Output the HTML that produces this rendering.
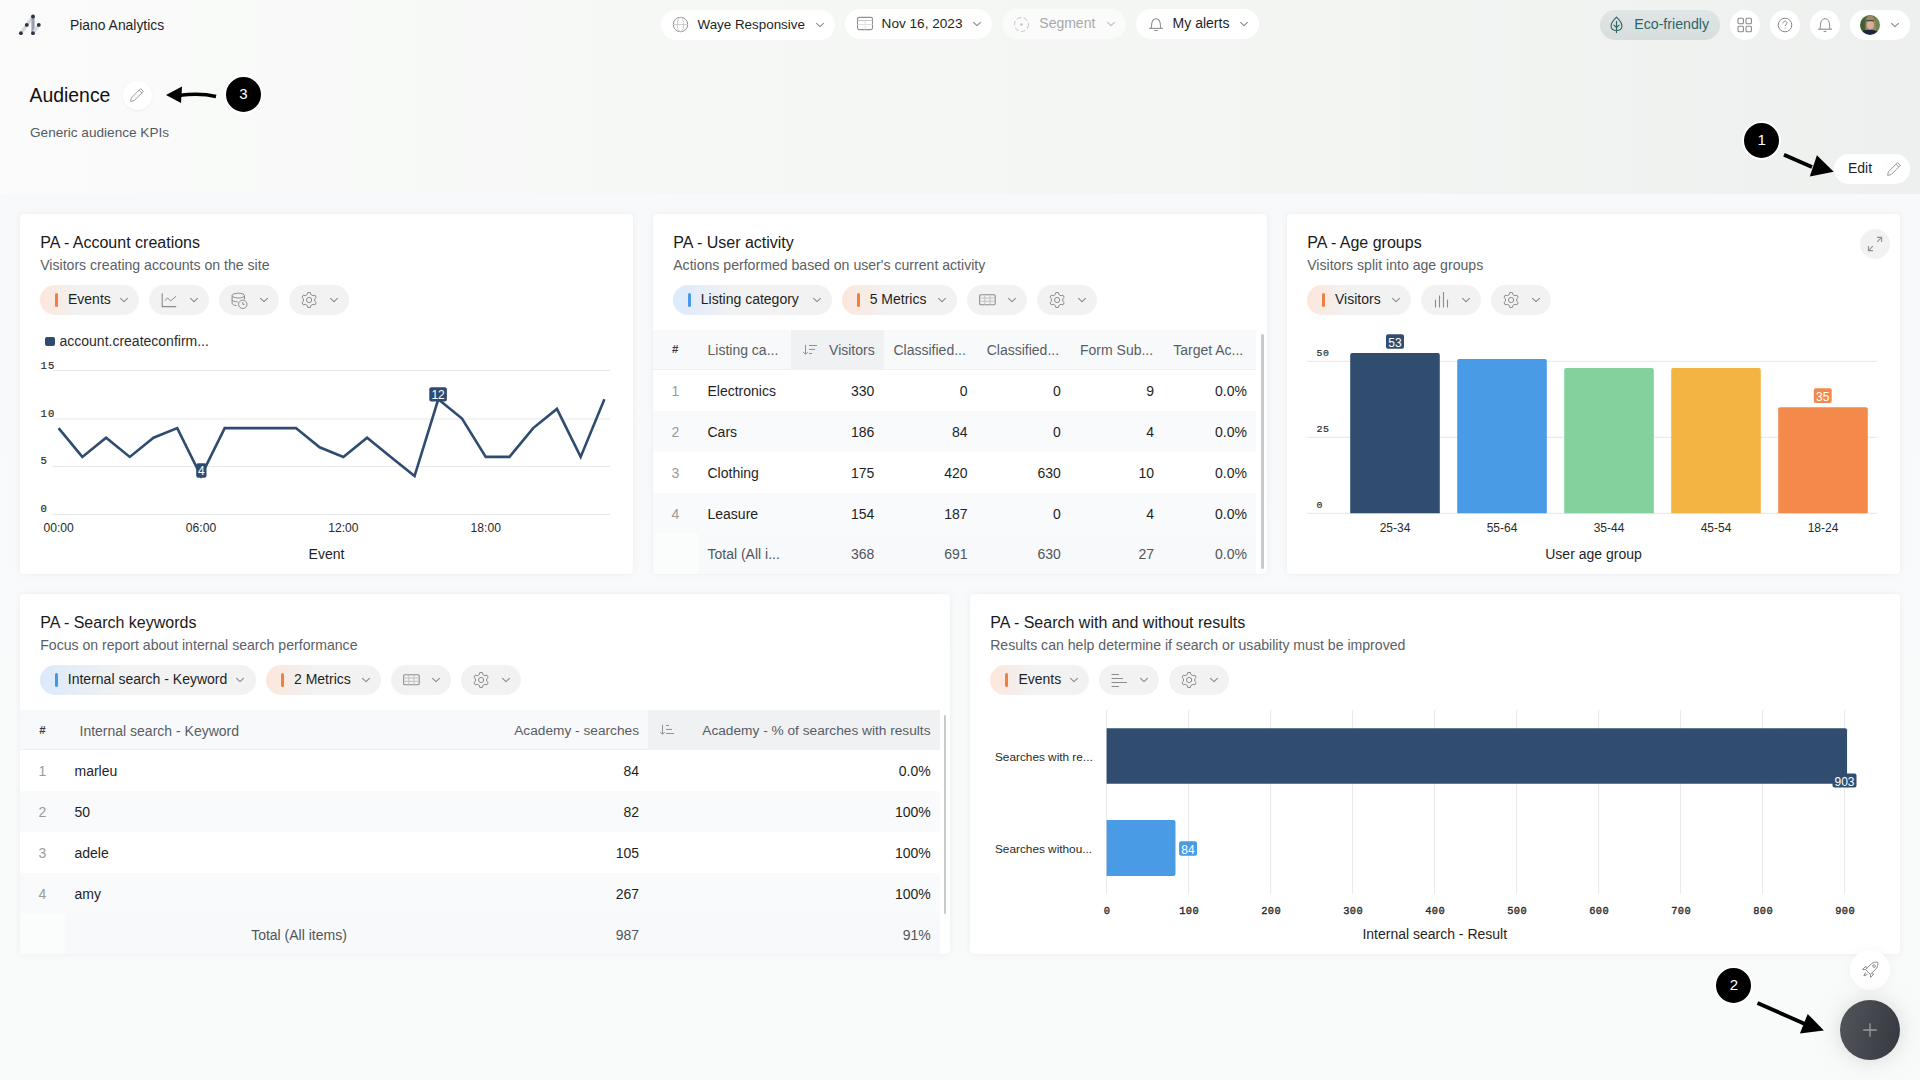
<!DOCTYPE html>
<html><head><meta charset="utf-8"><title>Piano Analytics - Audience</title>
<style>
html,body{margin:0;padding:0;width:1920px;height:1080px;overflow:hidden;background:#f8f9fa;font-family:"Liberation Sans",sans-serif}
body>div,body>svg{position:absolute}
</style></head><body>
<div style="left:0;top:0;width:1920px;height:194px;background:linear-gradient(90deg,#fafbfa 0%,#f6f8f6 35%,#f3f5f3 70%,#eef0ef 100%)"></div><div style="left:0;top:194px;width:1920px;height:886px;background:linear-gradient(180deg,#f8f9fa 0%,#f9fafa 60%,#f9fbfa 100%)"></div><svg style="left:16px;top:12px;" width="28" height="26" viewBox="0 0 28 26">
<path d="M4.9 21.2 L17 4.5" stroke="#d5d8de" stroke-width="3.2" stroke-linecap="round"/>
<path d="M17 4.5 L17 21.2" stroke="#9aa0ab" stroke-width="3.2" stroke-linecap="round"/>
<path d="M17 21.2 L22.8 12.9" stroke="#d5d8de" stroke-width="3.2" stroke-linecap="round"/>
<circle cx="17" cy="4.5" r="1.9" fill="#2b3347"/><circle cx="10.8" cy="12.9" r="1.9" fill="#2b3347"/>
<circle cx="22.8" cy="12.9" r="1.9" fill="#2b3347"/><circle cx="4.9" cy="21.2" r="1.9" fill="#2b3347"/>
<circle cx="17" cy="21.2" r="1.9" fill="#2b3347"/></svg><div style="left:70.00px;top:18.83px;font:400 13.9px/13.9px 'Liberation Sans', sans-serif;color:#1f1f1f;white-space:nowrap;">Piano Analytics</div><div style="left:661px;top:10px;width:174px;height:30px;background:#ffffff;border-radius:15px;"></div><svg style="left:672px;top:16px;" width="17" height="17" viewBox="0 0 17 17"><circle cx="8.5" cy="8.5" r="7.2" fill="none" stroke="#8f8f8f" stroke-width="1"/><ellipse cx="8.5" cy="8.5" rx="3.2" ry="7.2" fill="none" stroke="#cfcfcf" stroke-width="1"/><path d="M1.3 8.5 H15.7" stroke="#cfcfcf" stroke-width="1"/></svg><div style="left:697.50px;top:17.86px;font:400 13.4px/13.4px 'Liberation Sans', sans-serif;color:#1f1f1f;white-space:nowrap;">Waye Responsive</div><svg style="left:813.8px;top:19.6px;" width="12" height="10" viewBox="0 0 12 10"><path d="M2.55 3.3 L6 6.7 L9.45 3.3" fill="none" stroke="#8c8c8c" stroke-width="1.1" stroke-linecap="round" stroke-linejoin="round"/></svg><div style="left:845px;top:9px;width:147px;height:30px;background:#ffffff;border-radius:15px;"></div><svg style="left:856px;top:16px;" width="18" height="15" viewBox="0 0 18 15"><rect x="1.5" y="1.4" width="15" height="12.2" rx="1.6" fill="none" stroke="#8f9094" stroke-width="1.1"/><path d="M1.5 4.6 H16.5" stroke="#c4c5c7" stroke-width="1"/><path d="M1.5 8.5 H16.5 M9.2 4.6 V13.6" stroke="#dfe0e1" stroke-width="1"/></svg><div style="left:881.60px;top:16.79px;font:400 13.6px/13.6px 'Liberation Sans', sans-serif;color:#1f1f1f;white-space:nowrap;">Nov 16, 2023</div><svg style="left:970.8px;top:18.6px;" width="12" height="10" viewBox="0 0 12 10"><path d="M2.55 3.3 L6 6.7 L9.45 3.3" fill="none" stroke="#8c8c8c" stroke-width="1.1" stroke-linecap="round" stroke-linejoin="round"/></svg><div style="left:1002px;top:9px;width:124px;height:30px;background:rgba(255,255,255,0.55);border-radius:15px;"></div><svg style="left:1013px;top:16px;" width="17" height="17" viewBox="0 0 17 17"><circle cx="8.5" cy="8.5" r="7" fill="none" stroke="#c4c4c4" stroke-width="1" stroke-dasharray="4.5 2.5"/><circle cx="8.5" cy="8.5" r="1.3" fill="#c4c4c4"/></svg><div style="left:1039.30px;top:15.95px;font:400 14px/14px 'Liberation Sans', sans-serif;color:#a9a9a9;white-space:nowrap;">Segment</div><svg style="left:1105px;top:18.6px;" width="12" height="10" viewBox="0 0 12 10"><path d="M2.55 3.3 L6 6.7 L9.45 3.3" fill="none" stroke="#bdbdbd" stroke-width="1.1" stroke-linecap="round" stroke-linejoin="round"/></svg><div style="left:1136px;top:9px;width:123px;height:30px;background:#ffffff;border-radius:15px;"></div><svg style="left:1148px;top:17px;" width="16" height="15" viewBox="0 0 16 15"><path d="M3.3 11 C3.5 8 3.6 5.5 4.6 3.6 C5.4 2.3 6.6 1.7 8 1.7 C9.4 1.7 10.6 2.3 11.4 3.6 C12.4 5.5 12.5 8 12.7 11" fill="none" stroke="#8f9094" stroke-width="1.05"/><path d="M1 11.4 H15" stroke="#8f9094" stroke-width="1.1"/><path d="M6.2 13.5 H9.8" stroke="#8f9094" stroke-width="1"/></svg><div style="left:1172.60px;top:15.95px;font:400 14px/14px 'Liberation Sans', sans-serif;color:#1f1f1f;white-space:nowrap;">My alerts</div><svg style="left:1237.6px;top:18.6px;" width="12" height="10" viewBox="0 0 12 10"><path d="M2.55 3.3 L6 6.7 L9.45 3.3" fill="none" stroke="#8c8c8c" stroke-width="1.1" stroke-linecap="round" stroke-linejoin="round"/></svg><div style="left:1600px;top:10px;width:120px;height:30px;background:linear-gradient(180deg,#e0e5e5,#d7dddd);border-radius:15px"></div><svg style="left:1609px;top:16px;" width="15" height="18" viewBox="0 0 15 18"><path d="M7.5 1.2 C10.4 4 12.9 7 12.9 10 C12.9 12.8 10.6 14.5 7.5 14.5 C4.4 14.5 2.1 12.8 2.1 10 C2.1 7 4.6 4 7.5 1.2 Z" fill="none" stroke="#2a6566" stroke-width="1.15"/><path d="M7.5 5.3 V16.6 M4.9 9.2 L7.5 11.7 L10.1 9.2" fill="none" stroke="#2a6566" stroke-width="1.15" stroke-linecap="round" stroke-linejoin="round"/></svg><div style="left:1634.20px;top:16.78px;font:400 14.2px/14.2px 'Liberation Sans', sans-serif;color:#2b6767;white-space:nowrap;">Eco-friendly</div><div style="left:1730.0px;top:10.0px;width:30px;height:30px;background:#fff;border-radius:50%"></div><svg style="left:1737px;top:17px;" width="16" height="16" viewBox="0 0 16 16"><rect x="1" y="1.3" width="5.4" height="5.4" rx="1" fill="none" stroke="#8a8a8a" stroke-width="1.1"/><rect x="9" y="1.3" width="5.4" height="5.4" rx="1" fill="none" stroke="#8a8a8a" stroke-width="1.1"/><rect x="1" y="9.3" width="5.4" height="5.4" rx="1" fill="none" stroke="#8a8a8a" stroke-width="1.1"/><rect x="9" y="9.3" width="5.4" height="5.4" rx="1" fill="none" stroke="#8a8a8a" stroke-width="1.1"/></svg><div style="left:1770.0px;top:10.0px;width:30px;height:30px;background:#fff;border-radius:50%"></div><svg style="left:1777px;top:17px;" width="16" height="16" viewBox="0 0 16 16"><circle cx="8" cy="8" r="6.8" fill="none" stroke="#8a8a8a" stroke-width="1"/><path d="M6 6.3 C6 4.9 7 4.2 8 4.2 C9.1 4.2 10 4.9 10 6 C10 7.3 8.2 7.5 8.2 9" fill="none" stroke="#8a8a8a" stroke-width="1"/><circle cx="8.1" cy="11" r="0.6" fill="#8a8a8a"/></svg><div style="left:1810.0px;top:10.0px;width:30px;height:30px;background:#fff;border-radius:50%"></div><svg style="left:1817px;top:17px;" width="16" height="16" viewBox="0 0 16 16"><path d="M3.3 11.8 C3.3 8 3.4 5.5 4.6 3.6 C5.4 2.3 6.6 1.7 8 1.7 C9.4 1.7 10.6 2.3 11.4 3.6 C12.6 5.5 12.7 8 12.7 11.8" fill="none" stroke="#8a8a8a" stroke-width="1"/><path d="M1 12.2 H15" stroke="#8a8a8a" stroke-width="1.1"/><path d="M6.6 14.4 H9.4" stroke="#8a8a8a" stroke-width="1"/></svg><div style="left:1850px;top:10px;width:60px;height:30px;background:#ffffff;border-radius:15px;"></div><svg style="left:1860px;top:15px;" width="20" height="20" viewBox="0 0 20 20"><defs><clipPath id="av"><circle cx="10" cy="10" r="10"/></clipPath><filter id="avb" x="-20%" y="-20%" width="140%" height="140%"><feGaussianBlur stdDeviation="0.55"/></filter></defs>
<g clip-path="url(#av)"><g filter="url(#avb)"><rect x="-2" y="-2" width="24" height="24" fill="#55743f"/><rect x="-2" y="-2" width="7" height="24" fill="#3f5e30"/><rect x="15" y="-2" width="7" height="24" fill="#6a8850"/>
<path d="M5.8 16 C5.2 11 5.5 4.5 7.8 1.6 C9.3 0.4 12 0.4 13.4 1.7 C15.6 4.5 15.6 11 16.4 17 Z" fill="#a08a66"/>
<ellipse cx="10.3" cy="10" rx="3.5" ry="5" fill="#d8b096"/>
<path d="M6.2 5.6 H13.9" stroke="#4b4452" stroke-width="1.3"/>

<path d="M-1 22 C0 16 4 14.8 10 14.8 C15 14.8 19 16 20.5 22 Z" fill="#1f2640"/></g></g></svg><svg style="left:1888.8px;top:19.8px;" width="12" height="10" viewBox="0 0 12 10"><path d="M2.55 3.3 L6 6.7 L9.45 3.3" fill="none" stroke="#8a8a8a" stroke-width="1.1" stroke-linecap="round" stroke-linejoin="round"/></svg><div style="left:29.50px;top:86.18px;font:400 19.4px/19.4px 'Liberation Sans', sans-serif;color:#111;white-space:nowrap;">Audience</div><div style="left:122.5px;top:80.5px;width:29px;height:29px;background:#fff;border-radius:50%;box-shadow:0 1px 3px rgba(0,0,0,0.05)"></div><svg style="left:129px;top:87px;" width="16" height="16" viewBox="0 0 16 16"><g transform="scale(1.0)"><path d="M11.6 1.6 L14.4 4.4 L5.2 13.6 L1.6 14.4 L2.4 10.8 Z" fill="none" stroke="#9a9a9a" stroke-width="1" stroke-linejoin="round"/><path d="M10 3.2 L12.8 6" stroke="#9a9a9a" stroke-width="1"/></g></svg><div style="left:30.00px;top:125.69px;font:400 13.6px/13.6px 'Liberation Sans', sans-serif;color:#555b61;white-space:nowrap;">Generic audience KPIs</div><svg style="left:160px;top:82px;" width="62" height="26" viewBox="0 0 62 26"><path d="M56 14.5 C44 11.5 32 11.8 20 13.2" fill="none" stroke="#000" stroke-width="3.4"/><path d="M6 13 L22 4.5 L21 21 Z" fill="#000"/></svg><div style="left:223.9px;top:74.9px;width:39px;height:39px;background:#000;border-radius:50%;border:2px solid #fff;box-sizing:border-box"></div><div style="left:-256.60px;width:1000px;text-align:center;top:85.70px;font:400 15px/15px 'Liberation Sans', sans-serif;color:#fff;white-space:nowrap;">3</div><div style="left:1834px;top:154px;width:76px;height:30px;background:#fff;border-radius:15px"></div><div style="left:1848.00px;top:160.85px;font:400 14px/14px 'Liberation Sans', sans-serif;color:#1f1f1f;white-space:nowrap;">Edit</div><svg style="left:1886px;top:161px;" width="16" height="16" viewBox="0 0 16 16"><g transform="scale(1.0)"><path d="M11.6 1.6 L14.4 4.4 L5.2 13.6 L1.6 14.4 L2.4 10.8 Z" fill="none" stroke="#9a9a9a" stroke-width="1" stroke-linejoin="round"/><path d="M10 3.2 L12.8 6" stroke="#9a9a9a" stroke-width="1"/></g></svg><div style="left:1742.1px;top:121.30000000000001px;width:39px;height:39px;background:#000;border-radius:50%;border:2px solid #fff;box-sizing:border-box"></div><div style="left:1261.60px;width:1000px;text-align:center;top:132.10px;font:400 15px/15px 'Liberation Sans', sans-serif;color:#fff;white-space:nowrap;">1</div><svg style="left:1780px;top:150px;" width="56" height="30" viewBox="0 0 56 30"><path d="M4 4.8 L32 17" fill="none" stroke="#000" stroke-width="3.8"/><path d="M36.9 5.3 L29.8 26.4 L53.7 21.7 Z" fill="#000"/></svg><div style="left:20px;top:214px;width:613.3px;height:360px;background:#fff;border-radius:4px;box-shadow:0 0 10px rgba(30,40,60,0.045),0 0 2px rgba(30,40,60,0.035)"></div><div style="left:40.20px;top:235.46px;font:400 16px/16px 'Liberation Sans', sans-serif;color:#1a1a1a;white-space:nowrap;">PA - Account creations</div><div style="left:40.20px;top:258.26px;font:400 14.1px/14.1px 'Liberation Sans', sans-serif;color:#5b6066;white-space:nowrap;">Visitors creating accounts on the site</div><div style="left:40px;top:285px;width:99px;height:30px;background:linear-gradient(90deg,#fde6da 0%,#f2f2f2 38%,#f2f2f2 100%);border-radius:15px"></div><div style="left:55px;top:293px;width:3px;height:14px;background:#f27f3d;border-radius:1.5px"></div><div style="left:68.00px;top:291.95px;font:400 14px/14px 'Liberation Sans', sans-serif;color:#1f1f1f;white-space:nowrap;">Events</div><svg style="left:117.8px;top:294.8px;" width="12" height="10" viewBox="0 0 12 10"><path d="M2.55 3.3 L6 6.7 L9.45 3.3" fill="none" stroke="#8c8c8c" stroke-width="1.1" stroke-linecap="round" stroke-linejoin="round"/></svg><div style="left:149.2px;top:285px;width:60px;height:30px;background:#f2f2f2;border-radius:15px"></div><svg style="left:161.2px;top:292px;" width="17" height="16" viewBox="0 0 17 16"><path d="M1.2 1.2 V14.6 H15.2" fill="none" stroke="#8c8c8c" stroke-width="1.1"/><path d="M3.8 8.8 L6.4 6 L9.7 8.8 L15.2 4.2" fill="none" stroke="#8c8c8c" stroke-width="1"/></svg><svg style="left:188.2px;top:294.8px;" width="12" height="10" viewBox="0 0 12 10"><path d="M2.55 3.3 L6 6.7 L9.45 3.3" fill="none" stroke="#8c8c8c" stroke-width="1.1" stroke-linecap="round" stroke-linejoin="round"/></svg><div style="left:219.2px;top:285px;width:60px;height:30px;background:#f2f2f2;border-radius:15px"></div><svg style="left:231.2px;top:292px;" width="17" height="17" viewBox="0 0 17 17"><ellipse cx="7.3" cy="3.6" rx="6.2" ry="2.4" fill="none" stroke="#8c8c8c" stroke-width="1"/><path d="M1.1 3.6 V11.2 C1.1 12.4 3 13.4 5.6 13.6 M13.5 3.6 V7.4 M1.1 7.5 C1.1 8.8 3.5 9.8 6.8 9.9" fill="none" stroke="#8c8c8c" stroke-width="1"/><circle cx="11.8" cy="12.3" r="4.2" fill="#f2f2f2" stroke="#8c8c8c" stroke-width="1"/><path d="M11.8 10 V12.4 H13.6" fill="none" stroke="#8c8c8c" stroke-width="1"/></svg><svg style="left:258.2px;top:294.8px;" width="12" height="10" viewBox="0 0 12 10"><path d="M2.55 3.3 L6 6.7 L9.45 3.3" fill="none" stroke="#8c8c8c" stroke-width="1.1" stroke-linecap="round" stroke-linejoin="round"/></svg><div style="left:289.2px;top:285px;width:60px;height:30px;background:#f2f2f2;border-radius:15px"></div><svg style="left:301.2px;top:292px;" width="18" height="18" viewBox="0 0 18 18"><path d="M6.39 2.46 L6.81 0.51 L9.39 0.51 L9.81 2.46 L12.04 3.75 L13.94 3.14 L15.23 5.37 L13.76 6.71 L13.76 9.29 L15.23 10.63 L13.94 12.86 L12.04 12.25 L9.81 13.54 L9.39 15.49 L6.81 15.49 L6.39 13.54 L4.16 12.25 L2.26 12.86 L0.97 10.63 L2.44 9.29 L2.44 6.71 L0.97 5.37 L2.26 3.14 L4.16 3.75 Z" fill="none" stroke="#8c8c8c" stroke-width="1" stroke-linejoin="round"/><circle cx="8.1" cy="8" r="2.6" fill="none" stroke="#8c8c8c" stroke-width="1"/></svg><svg style="left:328.2px;top:294.8px;" width="12" height="10" viewBox="0 0 12 10"><path d="M2.55 3.3 L6 6.7 L9.45 3.3" fill="none" stroke="#8c8c8c" stroke-width="1.1" stroke-linecap="round" stroke-linejoin="round"/></svg><div style="left:45px;top:336.5px;width:10px;height:9.5px;background:#2f4c6f;border-radius:2px"></div><div style="left:59.50px;top:334.45px;font:400 14px/14px 'Liberation Sans', sans-serif;color:#2b2b2b;white-space:nowrap;">account.createconfirm...</div><svg style="left:20px;top:320px" width="613" height="254" viewBox="20 320 613 254"><rect x="53" y="370.0" width="557" height="1" fill="#e6e7e8"/><rect x="53" y="418.5" width="557" height="1" fill="#e6e7e8"/><rect x="53" y="466.0" width="557" height="1" fill="#e6e7e8"/><rect x="53" y="514.0" width="557" height="1" fill="#e6e7e8"/><path d="M58.60 428.10 L82.33 456.90 L106.06 437.70 L129.79 456.90 L153.52 437.70 L177.25 428.10 L200.98 476.10 L224.71 428.10 L248.44 428.10 L272.17 428.10 L295.90 428.10 L319.63 447.30 L343.36 456.90 L367.09 437.70 L390.82 456.90 L414.55 476.10 L438.28 399.30 L462.01 418.50 L485.74 456.90 L509.47 456.90 L533.20 428.10 L556.93 408.90 L580.66 456.90 L604.39 399.30" fill="none" stroke="#2f4c70" stroke-width="2.6" stroke-linejoin="miter" stroke-miterlimit="3"/><rect x="196.2" y="463.2" width="10.3" height="14.6" rx="2" fill="#2f4c70"/><rect x="429.3" y="387.2" width="17.6" height="14.4" rx="2" fill="#2f4c70"/></svg><div style="left:40.60px;top:360.93px;font:400 10.6px/10.6px 'Liberation Mono', monospace;color:#2a2a2a;white-space:nowrap;letter-spacing:1px;-webkit-text-stroke:0.2px #2a2a2a">15</div><div style="left:40.60px;top:409.23px;font:400 10.6px/10.6px 'Liberation Mono', monospace;color:#2a2a2a;white-space:nowrap;letter-spacing:1px;-webkit-text-stroke:0.2px #2a2a2a">10</div><div style="left:40.60px;top:455.83px;font:400 10.6px/10.6px 'Liberation Mono', monospace;color:#2a2a2a;white-space:nowrap;letter-spacing:1px;-webkit-text-stroke:0.2px #2a2a2a">5</div><div style="left:40.60px;top:504.03px;font:400 10.6px/10.6px 'Liberation Mono', monospace;color:#2a2a2a;white-space:nowrap;letter-spacing:1px;-webkit-text-stroke:0.2px #2a2a2a">0</div><div style="left:-298.65px;width:1000px;text-align:center;top:465.44px;font:400 12px/12px 'Liberation Sans', sans-serif;color:#fff;white-space:nowrap;">4</div><div style="left:-61.90px;width:1000px;text-align:center;top:389.44px;font:400 12px/12px 'Liberation Sans', sans-serif;color:#fff;white-space:nowrap;">12</div><div style="left:-441.40px;width:1000px;text-align:center;top:521.96px;font:400 12.1px/12.1px 'Liberation Sans', sans-serif;color:#2a2a2a;white-space:nowrap;">00:00</div><div style="left:-299.02px;width:1000px;text-align:center;top:521.96px;font:400 12.1px/12.1px 'Liberation Sans', sans-serif;color:#2a2a2a;white-space:nowrap;">06:00</div><div style="left:-156.64px;width:1000px;text-align:center;top:521.96px;font:400 12.1px/12.1px 'Liberation Sans', sans-serif;color:#2a2a2a;white-space:nowrap;">12:00</div><div style="left:-14.26px;width:1000px;text-align:center;top:521.96px;font:400 12.1px/12.1px 'Liberation Sans', sans-serif;color:#2a2a2a;white-space:nowrap;">18:00</div><div style="left:-173.50px;width:1000px;text-align:center;top:547.15px;font:400 14px/14px 'Liberation Sans', sans-serif;color:#1f1f1f;white-space:nowrap;">Event</div><div style="left:653.3px;top:214px;width:613.4000000000001px;height:360px;background:#fff;border-radius:4px;box-shadow:0 0 10px rgba(30,40,60,0.045),0 0 2px rgba(30,40,60,0.035)"></div><div style="left:673.20px;top:235.46px;font:400 16px/16px 'Liberation Sans', sans-serif;color:#1a1a1a;white-space:nowrap;">PA - User activity</div><div style="left:673.20px;top:258.26px;font:400 14.1px/14.1px 'Liberation Sans', sans-serif;color:#5b6066;white-space:nowrap;">Actions performed based on user's current activity</div><div style="left:672.8px;top:285px;width:159.2px;height:30px;background:linear-gradient(90deg,#dbeafb 0%,#f2f2f2 38%,#f2f2f2 100%);border-radius:15px"></div><div style="left:687.8px;top:293px;width:3px;height:14px;background:#4796e8;border-radius:1.5px"></div><div style="left:700.80px;top:291.95px;font:400 14px/14px 'Liberation Sans', sans-serif;color:#1f1f1f;white-space:nowrap;">Listing category</div><svg style="left:810.8px;top:294.8px;" width="12" height="10" viewBox="0 0 12 10"><path d="M2.55 3.3 L6 6.7 L9.45 3.3" fill="none" stroke="#8c8c8c" stroke-width="1.1" stroke-linecap="round" stroke-linejoin="round"/></svg><div style="left:841.7px;top:285px;width:115.4px;height:30px;background:linear-gradient(90deg,#fde6da 0%,#f2f2f2 38%,#f2f2f2 100%);border-radius:15px"></div><div style="left:856.7px;top:293px;width:3px;height:14px;background:#f27f3d;border-radius:1.5px"></div><div style="left:869.70px;top:291.95px;font:400 14px/14px 'Liberation Sans', sans-serif;color:#1f1f1f;white-space:nowrap;">5 Metrics</div><svg style="left:935.9px;top:294.8px;" width="12" height="10" viewBox="0 0 12 10"><path d="M2.55 3.3 L6 6.7 L9.45 3.3" fill="none" stroke="#8c8c8c" stroke-width="1.1" stroke-linecap="round" stroke-linejoin="round"/></svg><div style="left:967px;top:285px;width:60px;height:30px;background:#f2f2f2;border-radius:15px"></div><svg style="left:979px;top:294px;" width="18" height="12" viewBox="0 0 18 12"><rect x="0.6" y="0.7" width="15.6" height="10" rx="1.2" fill="none" stroke="#8c8c8c" stroke-width="1.1"/><path d="M0.6 4 H16.2 M0.6 7.3 H16.2 M5.8 0.7 V10.7 M11 0.7 V10.7" stroke="#c2c2c2" stroke-width="1"/></svg><svg style="left:1006px;top:294.8px;" width="12" height="10" viewBox="0 0 12 10"><path d="M2.55 3.3 L6 6.7 L9.45 3.3" fill="none" stroke="#8c8c8c" stroke-width="1.1" stroke-linecap="round" stroke-linejoin="round"/></svg><div style="left:1037px;top:285px;width:60px;height:30px;background:#f2f2f2;border-radius:15px"></div><svg style="left:1049px;top:292px;" width="18" height="18" viewBox="0 0 18 18"><path d="M6.39 2.46 L6.81 0.51 L9.39 0.51 L9.81 2.46 L12.04 3.75 L13.94 3.14 L15.23 5.37 L13.76 6.71 L13.76 9.29 L15.23 10.63 L13.94 12.86 L12.04 12.25 L9.81 13.54 L9.39 15.49 L6.81 15.49 L6.39 13.54 L4.16 12.25 L2.26 12.86 L0.97 10.63 L2.44 9.29 L2.44 6.71 L0.97 5.37 L2.26 3.14 L4.16 3.75 Z" fill="none" stroke="#8c8c8c" stroke-width="1" stroke-linejoin="round"/><circle cx="8.1" cy="8" r="2.6" fill="none" stroke="#8c8c8c" stroke-width="1"/></svg><svg style="left:1076px;top:294.8px;" width="12" height="10" viewBox="0 0 12 10"><path d="M2.55 3.3 L6 6.7 L9.45 3.3" fill="none" stroke="#8c8c8c" stroke-width="1.1" stroke-linecap="round" stroke-linejoin="round"/></svg><div style="left:653.3px;top:330px;width:602.7px;height:40px;background:#f8f9fa;border-bottom:1px solid #eef0f2;box-sizing:border-box"></div><div style="left:791.2px;top:330px;width:92.6px;height:40px;background:#f0f1f3"></div><div style="left:653.3px;top:370px;width:602.7px;height:41px;background:#ffffff"></div><div style="left:653.3px;top:411px;width:602.7px;height:41px;background:#f9fafb"></div><div style="left:653.3px;top:452px;width:602.7px;height:41px;background:#ffffff"></div><div style="left:653.3px;top:493px;width:602.7px;height:41px;background:#f9fafb"></div><div style="left:653.3px;top:534px;width:602.7px;height:40px;background:#f8f9fa"></div><div style="left:653.3px;top:534px;width:45.30000000000007px;height:40px;background:#fbfcfc"></div><div style="left:1261px;top:334px;width:2.6px;height:235px;background:#c9cacb;border-radius:1.5px"></div><div style="left:175.30px;width:1000px;text-align:center;top:344.27px;font:700 11.5px/11.5px 'Liberation Sans', sans-serif;color:#3a3d42;white-space:nowrap;">#</div><div style="left:707.50px;top:343.25px;font:400 14px/14px 'Liberation Sans', sans-serif;color:#585d63;white-space:nowrap;">Listing ca...</div><svg style="left:802px;top:343px;" width="16" height="14" viewBox="0 0 16 14"><path d="M3.5 1.8 V11 M1.2 9.2 L3.5 11.2 L5.8 9.2" fill="none" stroke="#8f9094" stroke-width="1"/><path d="M7 2.5 H15 M7 6.4 H13 M7 10.5 H10" stroke="#8f9094" stroke-width="1"/></svg><div style="left:-125.30px;width:1000px;text-align:right;top:343.25px;font:400 14px/14px 'Liberation Sans', sans-serif;color:#585d63;white-space:nowrap;">Visitors</div><div style="left:893.50px;top:343.25px;font:400 14px/14px 'Liberation Sans', sans-serif;color:#585d63;white-space:nowrap;">Classified...</div><div style="left:986.70px;top:343.25px;font:400 14px/14px 'Liberation Sans', sans-serif;color:#585d63;white-space:nowrap;">Classified...</div><div style="left:1080.00px;top:343.25px;font:400 14px/14px 'Liberation Sans', sans-serif;color:#585d63;white-space:nowrap;">Form Sub...</div><div style="left:1173.20px;top:343.25px;font:400 14px/14px 'Liberation Sans', sans-serif;color:#585d63;white-space:nowrap;">Target Ac...</div><div style="left:175.30px;width:1000px;text-align:center;top:384.45px;font:400 14px/14px 'Liberation Sans', sans-serif;color:#9a9a9a;white-space:nowrap;">1</div><div style="left:707.50px;top:384.45px;font:400 14px/14px 'Liberation Sans', sans-serif;color:#1f1f1f;white-space:nowrap;">Electronics</div><div style="left:-125.60px;width:1000px;text-align:right;top:384.45px;font:400 14px/14px 'Liberation Sans', sans-serif;color:#1f1f1f;white-space:nowrap;">330</div><div style="left:-32.40px;width:1000px;text-align:right;top:384.45px;font:400 14px/14px 'Liberation Sans', sans-serif;color:#1f1f1f;white-space:nowrap;">0</div><div style="left:60.80px;width:1000px;text-align:right;top:384.45px;font:400 14px/14px 'Liberation Sans', sans-serif;color:#1f1f1f;white-space:nowrap;">0</div><div style="left:154.00px;width:1000px;text-align:right;top:384.45px;font:400 14px/14px 'Liberation Sans', sans-serif;color:#1f1f1f;white-space:nowrap;">9</div><div style="left:247.00px;width:1000px;text-align:right;top:384.45px;font:400 14px/14px 'Liberation Sans', sans-serif;color:#1f1f1f;white-space:nowrap;">0.0%</div><div style="left:175.30px;width:1000px;text-align:center;top:425.45px;font:400 14px/14px 'Liberation Sans', sans-serif;color:#9a9a9a;white-space:nowrap;">2</div><div style="left:707.50px;top:425.45px;font:400 14px/14px 'Liberation Sans', sans-serif;color:#1f1f1f;white-space:nowrap;">Cars</div><div style="left:-125.60px;width:1000px;text-align:right;top:425.45px;font:400 14px/14px 'Liberation Sans', sans-serif;color:#1f1f1f;white-space:nowrap;">186</div><div style="left:-32.40px;width:1000px;text-align:right;top:425.45px;font:400 14px/14px 'Liberation Sans', sans-serif;color:#1f1f1f;white-space:nowrap;">84</div><div style="left:60.80px;width:1000px;text-align:right;top:425.45px;font:400 14px/14px 'Liberation Sans', sans-serif;color:#1f1f1f;white-space:nowrap;">0</div><div style="left:154.00px;width:1000px;text-align:right;top:425.45px;font:400 14px/14px 'Liberation Sans', sans-serif;color:#1f1f1f;white-space:nowrap;">4</div><div style="left:247.00px;width:1000px;text-align:right;top:425.45px;font:400 14px/14px 'Liberation Sans', sans-serif;color:#1f1f1f;white-space:nowrap;">0.0%</div><div style="left:175.30px;width:1000px;text-align:center;top:466.45px;font:400 14px/14px 'Liberation Sans', sans-serif;color:#9a9a9a;white-space:nowrap;">3</div><div style="left:707.50px;top:466.45px;font:400 14px/14px 'Liberation Sans', sans-serif;color:#1f1f1f;white-space:nowrap;">Clothing</div><div style="left:-125.60px;width:1000px;text-align:right;top:466.45px;font:400 14px/14px 'Liberation Sans', sans-serif;color:#1f1f1f;white-space:nowrap;">175</div><div style="left:-32.40px;width:1000px;text-align:right;top:466.45px;font:400 14px/14px 'Liberation Sans', sans-serif;color:#1f1f1f;white-space:nowrap;">420</div><div style="left:60.80px;width:1000px;text-align:right;top:466.45px;font:400 14px/14px 'Liberation Sans', sans-serif;color:#1f1f1f;white-space:nowrap;">630</div><div style="left:154.00px;width:1000px;text-align:right;top:466.45px;font:400 14px/14px 'Liberation Sans', sans-serif;color:#1f1f1f;white-space:nowrap;">10</div><div style="left:247.00px;width:1000px;text-align:right;top:466.45px;font:400 14px/14px 'Liberation Sans', sans-serif;color:#1f1f1f;white-space:nowrap;">0.0%</div><div style="left:175.30px;width:1000px;text-align:center;top:507.45px;font:400 14px/14px 'Liberation Sans', sans-serif;color:#9a9a9a;white-space:nowrap;">4</div><div style="left:707.50px;top:507.45px;font:400 14px/14px 'Liberation Sans', sans-serif;color:#1f1f1f;white-space:nowrap;">Leasure</div><div style="left:-125.60px;width:1000px;text-align:right;top:507.45px;font:400 14px/14px 'Liberation Sans', sans-serif;color:#1f1f1f;white-space:nowrap;">154</div><div style="left:-32.40px;width:1000px;text-align:right;top:507.45px;font:400 14px/14px 'Liberation Sans', sans-serif;color:#1f1f1f;white-space:nowrap;">187</div><div style="left:60.80px;width:1000px;text-align:right;top:507.45px;font:400 14px/14px 'Liberation Sans', sans-serif;color:#1f1f1f;white-space:nowrap;">0</div><div style="left:154.00px;width:1000px;text-align:right;top:507.45px;font:400 14px/14px 'Liberation Sans', sans-serif;color:#1f1f1f;white-space:nowrap;">4</div><div style="left:247.00px;width:1000px;text-align:right;top:507.45px;font:400 14px/14px 'Liberation Sans', sans-serif;color:#1f1f1f;white-space:nowrap;">0.0%</div><div style="left:707.50px;top:547.45px;font:400 14px/14px 'Liberation Sans', sans-serif;color:#50555b;white-space:nowrap;">Total (All i...</div><div style="left:-125.60px;width:1000px;text-align:right;top:547.45px;font:400 14px/14px 'Liberation Sans', sans-serif;color:#50555b;white-space:nowrap;">368</div><div style="left:-32.40px;width:1000px;text-align:right;top:547.45px;font:400 14px/14px 'Liberation Sans', sans-serif;color:#50555b;white-space:nowrap;">691</div><div style="left:60.80px;width:1000px;text-align:right;top:547.45px;font:400 14px/14px 'Liberation Sans', sans-serif;color:#50555b;white-space:nowrap;">630</div><div style="left:154.00px;width:1000px;text-align:right;top:547.45px;font:400 14px/14px 'Liberation Sans', sans-serif;color:#50555b;white-space:nowrap;">27</div><div style="left:247.00px;width:1000px;text-align:right;top:547.45px;font:400 14px/14px 'Liberation Sans', sans-serif;color:#50555b;white-space:nowrap;">0.0%</div><div style="left:1286.7px;top:214px;width:613.3px;height:360px;background:#fff;border-radius:4px;box-shadow:0 0 10px rgba(30,40,60,0.045),0 0 2px rgba(30,40,60,0.035)"></div><div style="left:1307.20px;top:235.46px;font:400 16px/16px 'Liberation Sans', sans-serif;color:#1a1a1a;white-space:nowrap;">PA - Age groups</div><div style="left:1307.20px;top:258.26px;font:400 14.1px/14.1px 'Liberation Sans', sans-serif;color:#5b6066;white-space:nowrap;">Visitors split into age groups</div><div style="left:1860px;top:229px;width:30px;height:30px;background:#f2f2f2;border-radius:50%"></div><svg style="left:1867px;top:236px;" width="16" height="16" viewBox="0 0 16 16"><path d="M10 1.4 H14.6 V6 M14.6 1.4 L10.2 5.8 M6 14.6 H1.4 V10 M1.4 14.6 L5.8 10.2" fill="none" stroke="#8f9094" stroke-width="1.1"/></svg><div style="left:1307px;top:285px;width:103.8px;height:30px;background:linear-gradient(90deg,#fde6da 0%,#f2f2f2 38%,#f2f2f2 100%);border-radius:15px"></div><div style="left:1322px;top:293px;width:3px;height:14px;background:#f27f3d;border-radius:1.5px"></div><div style="left:1335.00px;top:291.95px;font:400 14px/14px 'Liberation Sans', sans-serif;color:#1f1f1f;white-space:nowrap;">Visitors</div><svg style="left:1389.6px;top:294.8px;" width="12" height="10" viewBox="0 0 12 10"><path d="M2.55 3.3 L6 6.7 L9.45 3.3" fill="none" stroke="#8c8c8c" stroke-width="1.1" stroke-linecap="round" stroke-linejoin="round"/></svg><div style="left:1421px;top:285px;width:60px;height:30px;background:#f2f2f2;border-radius:15px"></div><svg style="left:1433px;top:292px;" width="17" height="17" viewBox="0 0 17 17"><path d="M2.5 15 V8.1 M6.5 15 V3.9 M10.5 15 V0.3 M14.5 15 V8.1" stroke="#8c8c8c" stroke-width="1.1" stroke-linecap="round"/></svg><svg style="left:1460px;top:294.8px;" width="12" height="10" viewBox="0 0 12 10"><path d="M2.55 3.3 L6 6.7 L9.45 3.3" fill="none" stroke="#8c8c8c" stroke-width="1.1" stroke-linecap="round" stroke-linejoin="round"/></svg><div style="left:1491px;top:285px;width:60px;height:30px;background:#f2f2f2;border-radius:15px"></div><svg style="left:1503px;top:292px;" width="18" height="18" viewBox="0 0 18 18"><path d="M6.39 2.46 L6.81 0.51 L9.39 0.51 L9.81 2.46 L12.04 3.75 L13.94 3.14 L15.23 5.37 L13.76 6.71 L13.76 9.29 L15.23 10.63 L13.94 12.86 L12.04 12.25 L9.81 13.54 L9.39 15.49 L6.81 15.49 L6.39 13.54 L4.16 12.25 L2.26 12.86 L0.97 10.63 L2.44 9.29 L2.44 6.71 L0.97 5.37 L2.26 3.14 L4.16 3.75 Z" fill="none" stroke="#8c8c8c" stroke-width="1" stroke-linejoin="round"/><circle cx="8.1" cy="8" r="2.6" fill="none" stroke="#8c8c8c" stroke-width="1"/></svg><svg style="left:1530px;top:294.8px;" width="12" height="10" viewBox="0 0 12 10"><path d="M2.55 3.3 L6 6.7 L9.45 3.3" fill="none" stroke="#8c8c8c" stroke-width="1.1" stroke-linecap="round" stroke-linejoin="round"/></svg><svg style="left:1287px;top:320px" width="613" height="254" viewBox="1287 320 613 254"><rect x="1307" y="360.8" width="570" height="1" fill="#e6e7e8"/><rect x="1307" y="436.8" width="570" height="1" fill="#e6e7e8"/><rect x="1307" y="512.8" width="570" height="1" fill="#e6e7e8"/><path d="M1350.2 513.3 V355.1 Q1350.2 353.1 1352.2 353.1 H1437.8 Q1439.8 353.1 1439.8 355.1 V513.3 Z" fill="#304d70"/><path d="M1457.2 513.3 V361 Q1457.2 359 1459.2 359 H1544.8 Q1546.8 359 1546.8 361 V513.3 Z" fill="#4a9be6"/><path d="M1564.2 513.3 V370 Q1564.2 368 1566.2 368 H1651.8 Q1653.8 368 1653.8 370 V513.3 Z" fill="#84d19e"/><path d="M1671.2 513.3 V370.1 Q1671.2 368.1 1673.2 368.1 H1758.8 Q1760.8 368.1 1760.8 370.1 V513.3 Z" fill="#f4b441"/><path d="M1778.2 513.3 V409.2 Q1778.2 407.2 1780.2 407.2 H1865.8 Q1867.8 407.2 1867.8 409.2 V513.3 Z" fill="#f38a4b"/><rect x="1386" y="334.3" width="18" height="14.5" rx="2" fill="#304d70"/><rect x="1813.8" y="388.2" width="17.9" height="14.8" rx="2" fill="#f38a4b"/></svg><div style="left:1316.50px;top:348.72px;font:400 9.9px/9.9px 'Liberation Mono', monospace;color:#2a2a2a;white-space:nowrap;letter-spacing:0.5px;-webkit-text-stroke:0.2px #2a2a2a">50</div><div style="left:1316.50px;top:424.72px;font:400 9.9px/9.9px 'Liberation Mono', monospace;color:#2a2a2a;white-space:nowrap;letter-spacing:0.5px;-webkit-text-stroke:0.2px #2a2a2a">25</div><div style="left:1316.50px;top:500.72px;font:400 9.9px/9.9px 'Liberation Mono', monospace;color:#2a2a2a;white-space:nowrap;letter-spacing:0.5px;-webkit-text-stroke:0.2px #2a2a2a">0</div><div style="left:895.00px;width:1000px;text-align:center;top:337.04px;font:400 12px/12px 'Liberation Sans', sans-serif;color:#fff;white-space:nowrap;">53</div><div style="left:1322.75px;width:1000px;text-align:center;top:391.14px;font:400 12px/12px 'Liberation Sans', sans-serif;color:#fff;white-space:nowrap;">35</div><div style="left:895.00px;width:1000px;text-align:center;top:521.64px;font:400 12px/12px 'Liberation Sans', sans-serif;color:#2a2a2a;white-space:nowrap;">25-34</div><div style="left:1002.00px;width:1000px;text-align:center;top:521.64px;font:400 12px/12px 'Liberation Sans', sans-serif;color:#2a2a2a;white-space:nowrap;">55-64</div><div style="left:1109.00px;width:1000px;text-align:center;top:521.64px;font:400 12px/12px 'Liberation Sans', sans-serif;color:#2a2a2a;white-space:nowrap;">35-44</div><div style="left:1216.00px;width:1000px;text-align:center;top:521.64px;font:400 12px/12px 'Liberation Sans', sans-serif;color:#2a2a2a;white-space:nowrap;">45-54</div><div style="left:1323.00px;width:1000px;text-align:center;top:521.64px;font:400 12px/12px 'Liberation Sans', sans-serif;color:#2a2a2a;white-space:nowrap;">18-24</div><div style="left:1093.50px;width:1000px;text-align:center;top:547.05px;font:400 14px/14px 'Liberation Sans', sans-serif;color:#1f1f1f;white-space:nowrap;">User age group</div><div style="left:20px;top:594px;width:930px;height:360px;background:#fff;border-radius:4px;box-shadow:0 0 10px rgba(30,40,60,0.045),0 0 2px rgba(30,40,60,0.035)"></div><div style="left:40.20px;top:615.46px;font:400 16px/16px 'Liberation Sans', sans-serif;color:#1a1a1a;white-space:nowrap;">PA - Search keywords</div><div style="left:40.20px;top:638.26px;font:400 14.1px/14.1px 'Liberation Sans', sans-serif;color:#5b6066;white-space:nowrap;">Focus on report about internal search performance</div><div style="left:39.8px;top:665px;width:215.8px;height:30px;background:linear-gradient(90deg,#dbeafb 0%,#f2f2f2 38%,#f2f2f2 100%);border-radius:15px"></div><div style="left:54.8px;top:673px;width:3px;height:14px;background:#4796e8;border-radius:1.5px"></div><div style="left:67.80px;top:671.95px;font:400 14px/14px 'Liberation Sans', sans-serif;color:#1f1f1f;white-space:nowrap;">Internal search - Keyword</div><svg style="left:234.40000000000003px;top:674.8px;" width="12" height="10" viewBox="0 0 12 10"><path d="M2.55 3.3 L6 6.7 L9.45 3.3" fill="none" stroke="#8c8c8c" stroke-width="1.1" stroke-linecap="round" stroke-linejoin="round"/></svg><div style="left:266px;top:665px;width:114.8px;height:30px;background:linear-gradient(90deg,#fde6da 0%,#f2f2f2 38%,#f2f2f2 100%);border-radius:15px"></div><div style="left:281px;top:673px;width:3px;height:14px;background:#f27f3d;border-radius:1.5px"></div><div style="left:294.00px;top:671.95px;font:400 14px/14px 'Liberation Sans', sans-serif;color:#1f1f1f;white-space:nowrap;">2 Metrics</div><svg style="left:359.6px;top:674.8px;" width="12" height="10" viewBox="0 0 12 10"><path d="M2.55 3.3 L6 6.7 L9.45 3.3" fill="none" stroke="#8c8c8c" stroke-width="1.1" stroke-linecap="round" stroke-linejoin="round"/></svg><div style="left:391px;top:665px;width:60px;height:30px;background:#f2f2f2;border-radius:15px"></div><svg style="left:403px;top:674px;" width="18" height="12" viewBox="0 0 18 12"><rect x="0.6" y="0.7" width="15.6" height="10" rx="1.2" fill="none" stroke="#8c8c8c" stroke-width="1.1"/><path d="M0.6 4 H16.2 M0.6 7.3 H16.2 M5.8 0.7 V10.7 M11 0.7 V10.7" stroke="#c2c2c2" stroke-width="1"/></svg><svg style="left:430px;top:674.8px;" width="12" height="10" viewBox="0 0 12 10"><path d="M2.55 3.3 L6 6.7 L9.45 3.3" fill="none" stroke="#8c8c8c" stroke-width="1.1" stroke-linecap="round" stroke-linejoin="round"/></svg><div style="left:461px;top:665px;width:60px;height:30px;background:#f2f2f2;border-radius:15px"></div><svg style="left:473px;top:672px;" width="18" height="18" viewBox="0 0 18 18"><path d="M6.39 2.46 L6.81 0.51 L9.39 0.51 L9.81 2.46 L12.04 3.75 L13.94 3.14 L15.23 5.37 L13.76 6.71 L13.76 9.29 L15.23 10.63 L13.94 12.86 L12.04 12.25 L9.81 13.54 L9.39 15.49 L6.81 15.49 L6.39 13.54 L4.16 12.25 L2.26 12.86 L0.97 10.63 L2.44 9.29 L2.44 6.71 L0.97 5.37 L2.26 3.14 L4.16 3.75 Z" fill="none" stroke="#8c8c8c" stroke-width="1" stroke-linejoin="round"/><circle cx="8.1" cy="8" r="2.6" fill="none" stroke="#8c8c8c" stroke-width="1"/></svg><svg style="left:500px;top:674.8px;" width="12" height="10" viewBox="0 0 12 10"><path d="M2.55 3.3 L6 6.7 L9.45 3.3" fill="none" stroke="#8c8c8c" stroke-width="1.1" stroke-linecap="round" stroke-linejoin="round"/></svg><div style="left:20px;top:710px;width:920px;height:40px;background:#f8f9fa;border-bottom:1px solid #eef0f2;box-sizing:border-box"></div><div style="left:648px;top:710px;width:292px;height:40px;background:#f0f1f3"></div><div style="left:20px;top:750px;width:920px;height:41px;background:#ffffff"></div><div style="left:20px;top:791px;width:920px;height:41px;background:#f9fafb"></div><div style="left:20px;top:832px;width:920px;height:41px;background:#ffffff"></div><div style="left:20px;top:873px;width:920px;height:41px;background:#f9fafb"></div><div style="left:20px;top:914px;width:920px;height:40px;background:#f8f9fa"></div><div style="left:20px;top:914px;width:45.3px;height:40px;background:#fbfcfc"></div><div style="left:943.7px;top:715px;width:2.6px;height:199px;background:#c9cacb;border-radius:1.5px"></div><div style="left:-457.50px;width:1000px;text-align:center;top:724.67px;font:700 11.5px/11.5px 'Liberation Sans', sans-serif;color:#3a3d42;white-space:nowrap;">#</div><div style="left:79.50px;top:723.65px;font:400 14px/14px 'Liberation Sans', sans-serif;color:#585d63;white-space:nowrap;">Internal search - Keyword</div><div style="left:-361.00px;width:1000px;text-align:right;top:723.90px;font:400 13.7px/13.7px 'Liberation Sans', sans-serif;color:#585d63;white-space:nowrap;">Academy - searches</div><svg style="left:659px;top:723px;" width="16" height="14" viewBox="0 0 16 14"><path d="M3.5 1.8 V11 M1.2 9.2 L3.5 11.2 L5.8 9.2" fill="none" stroke="#8f9094" stroke-width="1"/><path d="M7 2.5 H10 M7 6.4 H13 M7 10.5 H15" stroke="#8f9094" stroke-width="1"/></svg><div style="left:-69.50px;width:1000px;text-align:right;top:723.90px;font:400 13.7px/13.7px 'Liberation Sans', sans-serif;color:#585d63;white-space:nowrap;">Academy - % of searches with results</div><div style="left:-457.50px;width:1000px;text-align:center;top:764.45px;font:400 14px/14px 'Liberation Sans', sans-serif;color:#9a9a9a;white-space:nowrap;">1</div><div style="left:74.50px;top:764.45px;font:400 14px/14px 'Liberation Sans', sans-serif;color:#1f1f1f;white-space:nowrap;">marleu</div><div style="left:-361.00px;width:1000px;text-align:right;top:764.45px;font:400 14px/14px 'Liberation Sans', sans-serif;color:#1f1f1f;white-space:nowrap;">84</div><div style="left:-69.30px;width:1000px;text-align:right;top:764.45px;font:400 14px/14px 'Liberation Sans', sans-serif;color:#1f1f1f;white-space:nowrap;">0.0%</div><div style="left:-457.50px;width:1000px;text-align:center;top:805.45px;font:400 14px/14px 'Liberation Sans', sans-serif;color:#9a9a9a;white-space:nowrap;">2</div><div style="left:74.50px;top:805.45px;font:400 14px/14px 'Liberation Sans', sans-serif;color:#1f1f1f;white-space:nowrap;">50</div><div style="left:-361.00px;width:1000px;text-align:right;top:805.45px;font:400 14px/14px 'Liberation Sans', sans-serif;color:#1f1f1f;white-space:nowrap;">82</div><div style="left:-69.30px;width:1000px;text-align:right;top:805.45px;font:400 14px/14px 'Liberation Sans', sans-serif;color:#1f1f1f;white-space:nowrap;">100%</div><div style="left:-457.50px;width:1000px;text-align:center;top:846.45px;font:400 14px/14px 'Liberation Sans', sans-serif;color:#9a9a9a;white-space:nowrap;">3</div><div style="left:74.50px;top:846.45px;font:400 14px/14px 'Liberation Sans', sans-serif;color:#1f1f1f;white-space:nowrap;">adele</div><div style="left:-361.00px;width:1000px;text-align:right;top:846.45px;font:400 14px/14px 'Liberation Sans', sans-serif;color:#1f1f1f;white-space:nowrap;">105</div><div style="left:-69.30px;width:1000px;text-align:right;top:846.45px;font:400 14px/14px 'Liberation Sans', sans-serif;color:#1f1f1f;white-space:nowrap;">100%</div><div style="left:-457.50px;width:1000px;text-align:center;top:887.45px;font:400 14px/14px 'Liberation Sans', sans-serif;color:#9a9a9a;white-space:nowrap;">4</div><div style="left:74.50px;top:887.45px;font:400 14px/14px 'Liberation Sans', sans-serif;color:#1f1f1f;white-space:nowrap;">amy</div><div style="left:-361.00px;width:1000px;text-align:right;top:887.45px;font:400 14px/14px 'Liberation Sans', sans-serif;color:#1f1f1f;white-space:nowrap;">267</div><div style="left:-69.30px;width:1000px;text-align:right;top:887.45px;font:400 14px/14px 'Liberation Sans', sans-serif;color:#1f1f1f;white-space:nowrap;">100%</div><div style="left:-201.00px;width:1000px;text-align:center;top:927.65px;font:400 14px/14px 'Liberation Sans', sans-serif;color:#50555b;white-space:nowrap;">Total (All items)</div><div style="left:-361.00px;width:1000px;text-align:right;top:927.65px;font:400 14px/14px 'Liberation Sans', sans-serif;color:#50555b;white-space:nowrap;">987</div><div style="left:-69.30px;width:1000px;text-align:right;top:927.65px;font:400 14px/14px 'Liberation Sans', sans-serif;color:#50555b;white-space:nowrap;">91%</div><div style="left:970px;top:594px;width:930px;height:360px;background:#fff;border-radius:4px;box-shadow:0 0 10px rgba(30,40,60,0.045),0 0 2px rgba(30,40,60,0.035)"></div><div style="left:990.20px;top:615.46px;font:400 16px/16px 'Liberation Sans', sans-serif;color:#1a1a1a;white-space:nowrap;">PA - Search with and without results</div><div style="left:990.20px;top:638.26px;font:400 14.1px/14.1px 'Liberation Sans', sans-serif;color:#5b6066;white-space:nowrap;">Results can help determine if search or usability must be improved</div><div style="left:990.4px;top:665px;width:98.4px;height:30px;background:linear-gradient(90deg,#fde6da 0%,#f2f2f2 38%,#f2f2f2 100%);border-radius:15px"></div><div style="left:1005.4px;top:673px;width:3px;height:14px;background:#f27f3d;border-radius:1.5px"></div><div style="left:1018.40px;top:671.95px;font:400 14px/14px 'Liberation Sans', sans-serif;color:#1f1f1f;white-space:nowrap;">Events</div><svg style="left:1067.6px;top:674.8px;" width="12" height="10" viewBox="0 0 12 10"><path d="M2.55 3.3 L6 6.7 L9.45 3.3" fill="none" stroke="#8c8c8c" stroke-width="1.1" stroke-linecap="round" stroke-linejoin="round"/></svg><div style="left:1099.4px;top:665px;width:60px;height:30px;background:#f2f2f2;border-radius:15px"></div><svg style="left:1111.4px;top:672px;" width="17" height="17" viewBox="0 0 17 17"><path d="M1 2.5 H7.6 M1 6.5 H11.5 M1 10.5 H15.5 M1 14.5 H7.6" stroke="#8c8c8c" stroke-width="1.1" stroke-linecap="round"/></svg><svg style="left:1138.4px;top:674.8px;" width="12" height="10" viewBox="0 0 12 10"><path d="M2.55 3.3 L6 6.7 L9.45 3.3" fill="none" stroke="#8c8c8c" stroke-width="1.1" stroke-linecap="round" stroke-linejoin="round"/></svg><div style="left:1169.2px;top:665px;width:60px;height:30px;background:#f2f2f2;border-radius:15px"></div><svg style="left:1181.2px;top:672px;" width="18" height="18" viewBox="0 0 18 18"><path d="M6.39 2.46 L6.81 0.51 L9.39 0.51 L9.81 2.46 L12.04 3.75 L13.94 3.14 L15.23 5.37 L13.76 6.71 L13.76 9.29 L15.23 10.63 L13.94 12.86 L12.04 12.25 L9.81 13.54 L9.39 15.49 L6.81 15.49 L6.39 13.54 L4.16 12.25 L2.26 12.86 L0.97 10.63 L2.44 9.29 L2.44 6.71 L0.97 5.37 L2.26 3.14 L4.16 3.75 Z" fill="none" stroke="#8c8c8c" stroke-width="1" stroke-linejoin="round"/><circle cx="8.1" cy="8" r="2.6" fill="none" stroke="#8c8c8c" stroke-width="1"/></svg><svg style="left:1208.2px;top:674.8px;" width="12" height="10" viewBox="0 0 12 10"><path d="M2.55 3.3 L6 6.7 L9.45 3.3" fill="none" stroke="#8c8c8c" stroke-width="1.1" stroke-linecap="round" stroke-linejoin="round"/></svg><svg style="left:970px;top:700px" width="930" height="254" viewBox="970 700 930 254"><rect x="1106.1" y="710" width="1" height="184" fill="#e6e7e8"/><rect x="1188.1" y="710" width="1" height="184" fill="#e6e7e8"/><rect x="1270.1" y="710" width="1" height="184" fill="#e6e7e8"/><rect x="1352.1" y="710" width="1" height="184" fill="#e6e7e8"/><rect x="1434.1" y="710" width="1" height="184" fill="#e6e7e8"/><rect x="1516.1" y="710" width="1" height="184" fill="#e6e7e8"/><rect x="1598.1" y="710" width="1" height="184" fill="#e6e7e8"/><rect x="1680.1" y="710" width="1" height="184" fill="#e6e7e8"/><rect x="1762.1" y="710" width="1" height="184" fill="#e6e7e8"/><rect x="1844.1" y="710" width="1" height="184" fill="#e6e7e8"/><path d="M1106.6 728.2 H1845.06 Q1847.06 728.2 1847.06 730.2 V781.8 Q1847.06 783.8 1845.06 783.8 H1106.6 Z" fill="#304d70"/><path d="M1106.6 820 H1173.48 Q1175.48 820 1175.48 822 V874 Q1175.48 876 1173.48 876 H1106.6 Z" fill="#4a9be6"/><rect x="1832.5" y="773.5" width="24" height="14" rx="2" fill="#304d70"/><rect x="1179.1" y="841.2" width="17.9" height="14.6" rx="2" fill="#4a9be6"/></svg><div style="left:995.00px;top:752.21px;font:400 11.8px/11.8px 'Liberation Sans', sans-serif;color:#2a2a2a;white-space:nowrap;">Searches with re...</div><div style="left:995.00px;top:844.21px;font:400 11.8px/11.8px 'Liberation Sans', sans-serif;color:#2a2a2a;white-space:nowrap;">Searches withou...</div><div style="left:1344.50px;width:1000px;text-align:center;top:775.84px;font:400 12px/12px 'Liberation Sans', sans-serif;color:#fff;white-space:nowrap;">903</div><div style="left:688.00px;width:1000px;text-align:center;top:843.84px;font:400 12px/12px 'Liberation Sans', sans-serif;color:#fff;white-space:nowrap;">84</div><div style="left:607.20px;width:1000px;text-align:center;top:906.40px;font:400 10.4px/10.4px 'Liberation Mono', monospace;color:#2a2a2a;white-space:nowrap;letter-spacing:0.4px;-webkit-text-stroke:0.35px #2a2a2a">0</div><div style="left:689.20px;width:1000px;text-align:center;top:906.40px;font:400 10.4px/10.4px 'Liberation Mono', monospace;color:#2a2a2a;white-space:nowrap;letter-spacing:0.4px;-webkit-text-stroke:0.35px #2a2a2a">100</div><div style="left:771.20px;width:1000px;text-align:center;top:906.40px;font:400 10.4px/10.4px 'Liberation Mono', monospace;color:#2a2a2a;white-space:nowrap;letter-spacing:0.4px;-webkit-text-stroke:0.35px #2a2a2a">200</div><div style="left:853.20px;width:1000px;text-align:center;top:906.40px;font:400 10.4px/10.4px 'Liberation Mono', monospace;color:#2a2a2a;white-space:nowrap;letter-spacing:0.4px;-webkit-text-stroke:0.35px #2a2a2a">300</div><div style="left:935.20px;width:1000px;text-align:center;top:906.40px;font:400 10.4px/10.4px 'Liberation Mono', monospace;color:#2a2a2a;white-space:nowrap;letter-spacing:0.4px;-webkit-text-stroke:0.35px #2a2a2a">400</div><div style="left:1017.20px;width:1000px;text-align:center;top:906.40px;font:400 10.4px/10.4px 'Liberation Mono', monospace;color:#2a2a2a;white-space:nowrap;letter-spacing:0.4px;-webkit-text-stroke:0.35px #2a2a2a">500</div><div style="left:1099.20px;width:1000px;text-align:center;top:906.40px;font:400 10.4px/10.4px 'Liberation Mono', monospace;color:#2a2a2a;white-space:nowrap;letter-spacing:0.4px;-webkit-text-stroke:0.35px #2a2a2a">600</div><div style="left:1181.20px;width:1000px;text-align:center;top:906.40px;font:400 10.4px/10.4px 'Liberation Mono', monospace;color:#2a2a2a;white-space:nowrap;letter-spacing:0.4px;-webkit-text-stroke:0.35px #2a2a2a">700</div><div style="left:1263.20px;width:1000px;text-align:center;top:906.40px;font:400 10.4px/10.4px 'Liberation Mono', monospace;color:#2a2a2a;white-space:nowrap;letter-spacing:0.4px;-webkit-text-stroke:0.35px #2a2a2a">800</div><div style="left:1345.20px;width:1000px;text-align:center;top:906.40px;font:400 10.4px/10.4px 'Liberation Mono', monospace;color:#2a2a2a;white-space:nowrap;letter-spacing:0.4px;-webkit-text-stroke:0.35px #2a2a2a">900</div><div style="left:934.75px;width:1000px;text-align:center;top:927.15px;font:400 14px/14px 'Liberation Sans', sans-serif;color:#1f1f1f;white-space:nowrap;">Internal search - Result</div><div style="left:1850px;top:950px;width:40px;height:40px;background:#fff;border-radius:50%;box-shadow:0 0 14px rgba(0,0,0,0.04)"></div><svg style="left:1855px;top:955px;" width="30" height="30" viewBox="0 0 30 30"><g fill="none" stroke="#8c8c8c" stroke-width="1" stroke-linejoin="round"><path d="M10.6 14.6 L16.4 8.8 C18.4 7.2 20.8 6.9 22.7 7.3 C23.1 9.2 22.8 11.6 21.2 13.6 L15.4 19.4 Z"/><path d="M11.6 13.6 L10.9 11.2 L7.6 14.5 L10.6 14.6"/><path d="M16.4 18.4 L18.8 19.1 L15.5 22.4 L15.4 19.4"/><circle cx="19.1" cy="11.1" r="1.3"/><path d="M10.6 17.3 L8.9 20.9 L12.6 19.3"/></g></svg><div style="left:1840px;top:1000px;width:60px;height:60px;background:linear-gradient(100deg,#52555b,#35383e);border-radius:50%;box-shadow:0 0 18px rgba(0,0,0,0.10),0 0 44px rgba(0,0,0,0.06)"></div><svg style="left:1862px;top:1022px;" width="16" height="16" viewBox="0 0 16 16"><path d="M8 1.2 V14.8 M1.2 8 H14.8" stroke="#9a9ca0" stroke-width="1.3"/></svg><div style="left:1714.3px;top:965.9px;width:39px;height:39px;background:#000;border-radius:50%;border:2px solid #fff;box-sizing:border-box"></div><div style="left:1233.80px;width:1000px;text-align:center;top:976.70px;font:400 15px/15px 'Liberation Sans', sans-serif;color:#fff;white-space:nowrap;">2</div><svg style="left:1750px;top:995px;" width="80" height="45" viewBox="0 0 80 45"><path d="M7.5 8 L55 29" fill="none" stroke="#000" stroke-width="3.8"/><path d="M57.7 18.9 L49.9 38.6 L73.9 35.4 Z" fill="#000"/></svg>
</body></html>
